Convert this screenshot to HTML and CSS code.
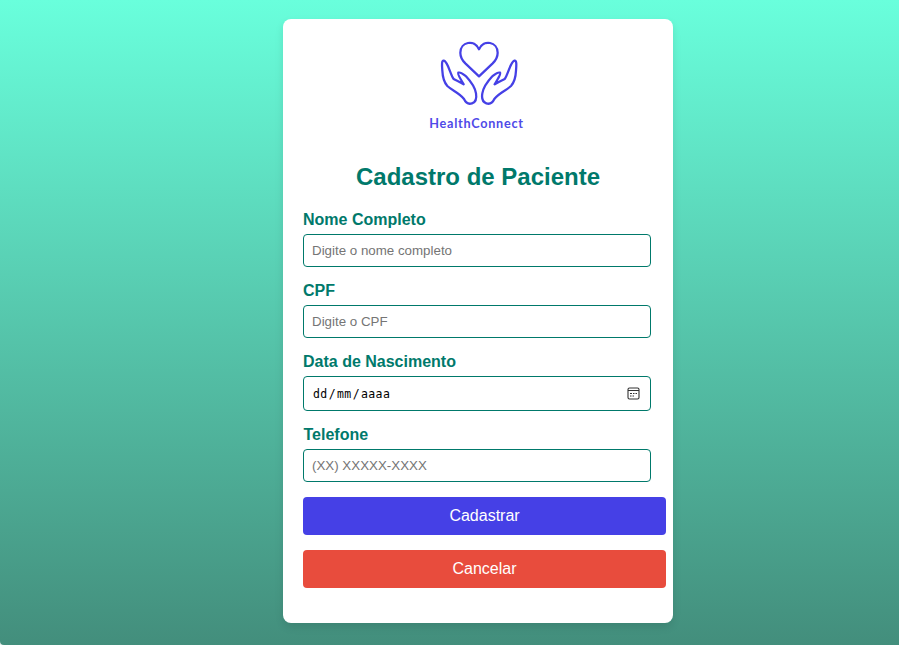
FILE: index.html
```html
<!DOCTYPE html>
<html lang="pt-BR">
<head>
<meta charset="UTF-8">
<title>Cadastro de Paciente</title>
<link rel="stylesheet" href="styles.css">
</head>
<body>
<main class="card">
  <svg class="logo" viewBox="0 0 360 330" role="img" aria-label="HealthConnect">
    <g class="logo-lines">
      <path d="M177 139L136 100C126 90 121 80 121 68C121 36 163 26 177 58C191 26 233 36 233 68C233 80 228 90 218 100Z"/>
      <path id="hand" d="M72 92C64 89 66 108 67 122C68 143 71 156 82 168C97 182 119 189 132 207C138 220 147 223 156 220C168 216 170 202 168 190C165 172 151 153 138 139C129 132 122 125 115 128C111 132 120 143 131 163C121 156 110 152 101 147C91 134 84 96 72 92Z"/>
      <use href="#hand" transform="translate(355 0) scale(-1 1)"/>
    </g>
    <text class="logo-name" x="28" y="293" textLength="281">HealthConnect</text>
  </svg>
  <h1>Cadastro de Paciente</h1>
  <form>
    <label for="nome">Nome Completo</label>
    <input id="nome" type="text" placeholder="Digite o nome completo">
    <label for="cpf">CPF</label>
    <input id="cpf" type="text" placeholder="Digite o CPF">
    <label for="data">Data de Nascimento</label>
    <div class="date" id="data" tabindex="0">
      <span class="date-text"><span>dd</span><span>/</span><span>mm</span><span>/</span><span>aaaa</span></span>
      <svg class="calendar" viewBox="0 0 13 13">
        <rect x="1" y="1" width="11" height="11" rx="1.5"/>
        <path d="M1 3.5H12M3 6.5H5M6 6.5H7.5M8.5 6.5H10M3 9H4.5M5.5 9H7"/>
      </svg>
    </div>
    <label class="phone-label" for="telefone">Telefone</label>
    <input id="telefone" type="text" placeholder="(XX) XXXXX-XXXX">
    <button class="save" type="button">Cadastrar</button>
    <button class="cancel" type="button">Cancelar</button>
  </form>
</main>
</body>
</html>
```
FILE: styles.css
```css
* { box-sizing: border-box; }
html { height: 100%; background: #e4eeeb; }
body {
  margin: 0;
  height: 645px;
  padding: 19px 0 0 283px;
  overflow: hidden;
  border-bottom-left-radius: 4px;
  font-family: "Liberation Sans", Arial, sans-serif;
  background: linear-gradient(#69ffdc, #438e7c);
}
.card {
  width: 390px;
  height: 604px;
  padding: 11px 20px 0;
  border-radius: 8px;
  background: #fff;
  box-shadow: 0 4px 8px rgba(0, 0, 0, .1);
}
.logo {
  display: block;
  width: 120px;
  height: 110px;
  margin-left: 117px;
}
.logo-lines {
  fill: none;
  stroke: #4540e6;
  stroke-width: 6.8;
  stroke-linejoin: round;
}
.logo-name {
  font: 700 38px Lato, sans-serif;
  fill: #4f4ae8;
}
h1 {
  margin: 23px 0 20px;
  font-size: 24px;
  line-height: 27px;
  text-align: center;
  color: #00796b;
}
form { display: flex; flex-direction: column; }
label {
  margin-bottom: 5px;
  font-size: 16px;
  font-weight: 700;
  line-height: 19px;
  color: #00796b;
}
.phone-label { padding-left: .5px; }
input, .date {
  width: 348px;
  height: 33px;
  margin: 0 0 14px;
  padding: 8px;
  border: 1px solid #00796b;
  border-radius: 4px;
  background: #fff;
  font: 13.333px "Liberation Sans", Arial, sans-serif;
}
input::placeholder { color: #757575; }
.date {
  display: flex;
  align-items: center;
  justify-content: space-between;
  height: 35px;
  padding-right: 10px;
}
.date-text {
  display: flex;
  gap: 1px;
  padding-left: 1px;
  font: 11.5px "DejaVu Sans Mono", monospace;
  letter-spacing: .4px;
}
.calendar {
  width: 13px;
  height: 13px;
  fill: none;
  stroke: #333;
  stroke-width: 1.1;
}
button {
  width: 363px;
  height: 38px;
  margin: 0 0 15px;
  padding: 0;
  border: 0;
  border-radius: 4px;
  color: #fff;
  font: 16px "Liberation Sans", Arial, sans-serif;
}
.save { margin-top: 1px; background: #4540e6; }
.cancel { background: #e84c3d; }
```
